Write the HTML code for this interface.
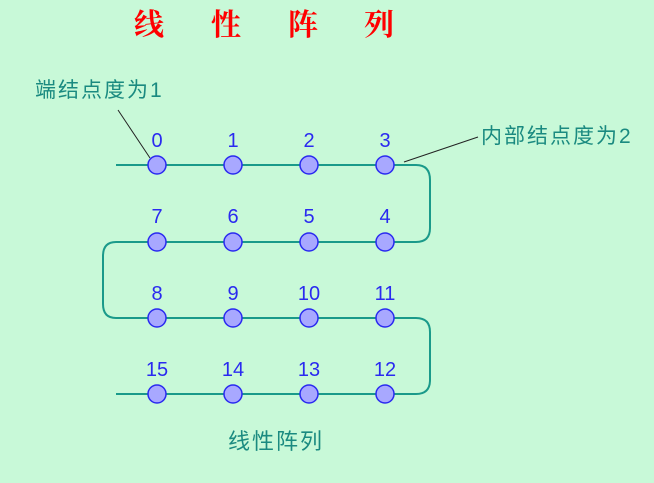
<!DOCTYPE html>
<html><head><meta charset="utf-8"><style>
html,body{margin:0;padding:0;width:654px;height:483px;background:#c8f9d8;overflow:hidden}
svg{display:block}
</style></head><body>
<svg width="654" height="483" xmlns="http://www.w3.org/2000/svg" font-family="Liberation Sans, Noto Sans CJK SC, sans-serif">
<g fill="#ff0000" font-weight="bold" font-size="30" font-family="Noto Serif CJK SC, serif">
<text x="134" y="35">线</text><text x="211" y="35">性</text><text x="288" y="35">阵</text><text x="364" y="35">列</text>
</g>
<g fill="#1a8a80" font-size="21" letter-spacing="2">
<text x="35" y="97">端结点度为1</text>
<text x="481" y="143">内部结点度为2</text>
<text x="228" y="449" font-size="22">线性阵列</text>
</g>
<g stroke="#222" stroke-width="1">
<line x1="118" y1="110" x2="150" y2="158"/>
<line x1="404" y1="162" x2="478" y2="137"/>
</g>
<g fill="none" stroke="#1a9a8a" stroke-width="2">
<path d="M116 165 H416 Q430 165 430 180 V228 Q430 242 416 242 H116 Q103 242 103 256 V304 Q103 318 116 318 H416 Q430 318 430 332 V380 Q430 394 416 394 H116"/>
</g>
<g fill="#a8a8ff" stroke="#2a2af0" stroke-width="1.5">
<circle cx="157" cy="165" r="9"/><circle cx="233" cy="165" r="9"/><circle cx="309" cy="165" r="9"/><circle cx="385" cy="165" r="9"/>
<circle cx="157" cy="242" r="9"/><circle cx="233" cy="242" r="9"/><circle cx="309" cy="242" r="9"/><circle cx="385" cy="242" r="9"/>
<circle cx="157" cy="318" r="9"/><circle cx="233" cy="318" r="9"/><circle cx="309" cy="318" r="9"/><circle cx="385" cy="318" r="9"/>
<circle cx="157" cy="394" r="9"/><circle cx="233" cy="394" r="9"/><circle cx="309" cy="394" r="9"/><circle cx="385" cy="394" r="9"/>
</g>
<g fill="#2a2af0" font-size="20" text-anchor="middle">
<text x="157" y="147">0</text><text x="233" y="147">1</text><text x="309" y="147">2</text><text x="385" y="147">3</text>
<text x="157" y="223">7</text><text x="233" y="223">6</text><text x="309" y="223">5</text><text x="385" y="223">4</text>
<text x="157" y="300">8</text><text x="233" y="300">9</text><text x="309" y="300">10</text><text x="385" y="300">11</text>
<text x="157" y="376">15</text><text x="233" y="376">14</text><text x="309" y="376">13</text><text x="385" y="376">12</text>
</g>
</svg>
</body></html>
